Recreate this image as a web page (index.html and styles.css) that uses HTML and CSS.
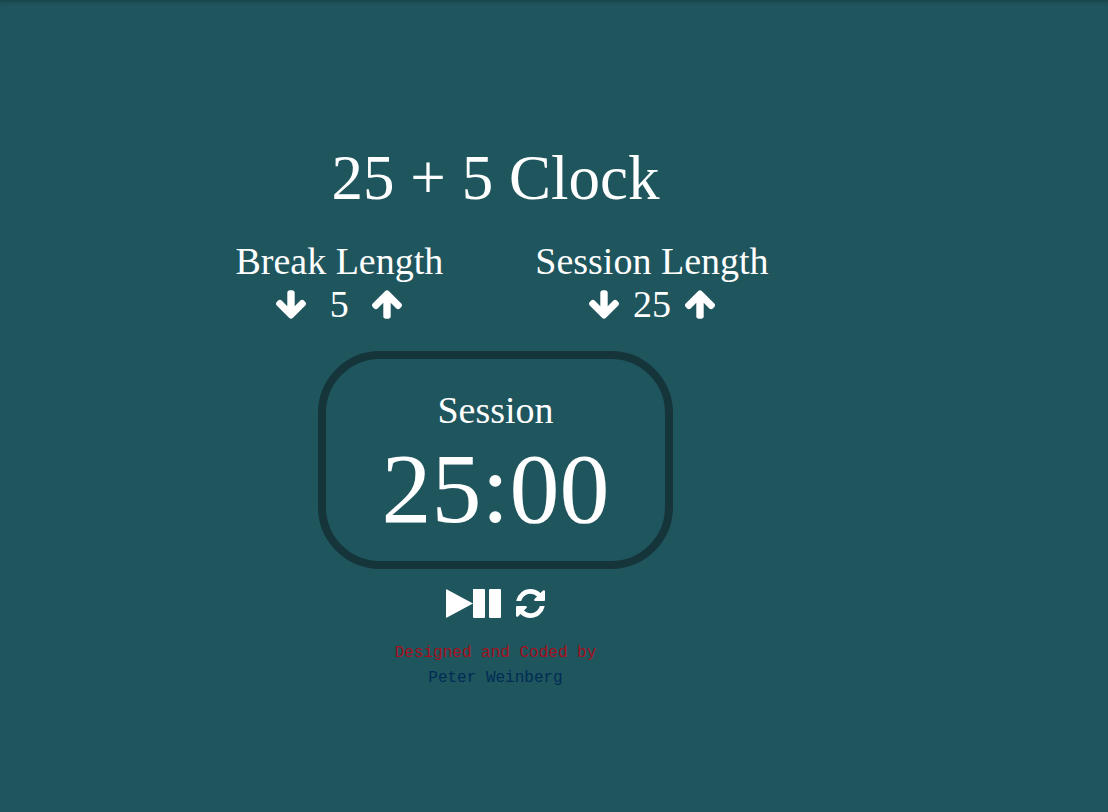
FILE: index.html
```html
<!DOCTYPE html>
<html lang="en">
<head>
<meta charset="utf-8">
<meta name="viewport" content="width=device-width, initial-scale=1">
<title>25 + 5 Clock</title>
<link rel="stylesheet" href="styles.css">
</head>
<body>
<svg class="sprite" aria-hidden="true">
  <symbol id="arrow-down" viewBox="117 128 1558 1483"><path d="M1675 832q0 53-37 90l-651 652q-39 37-91 37-53 0-90-37l-651-652q-38-36-38-90 0-53 38-91l74-75q39-37 91-37 53 0 90 37l294 294v-704q0-52 38-90t90-38h128q52 0 90 38t38 90v704l294-294q37-37 90-37 52 0 91 37l75 75q37 39 37 91z"/></symbol>
  <symbol id="arrow-up" viewBox="117 192 1558 1472"><path d="M1675 971q0 51-37 90l-75 75q-38 38-91 38-54 0-90-38l-294-293v704q0 52-37.500 84.500t-90.500 32.500h-128q-53 0-90.500-32.500t-37.500-84.500v-704l-294 293q-36 38-90 38t-90-38l-75-75q-38-38-38-90 0-53 38-91l651-651q35-37 90-37 54 0 91 37l651 651q37 39 37 91z"/></symbol>
</svg>
<main class="clock">
  <h1 class="title">25 + 5 Clock</h1>
  <div class="settings">
    <section class="setting" aria-labelledby="break-label">
      <h2 class="label" id="break-label">Break Length</h2>
      <div class="stepper">
        <button class="icon-button" type="button" aria-label="Decrease break length"><svg class="arrow"><use href="#arrow-down"/></svg></button>
        <span class="length">5</span>
        <button class="icon-button" type="button" aria-label="Increase break length"><svg class="arrow"><use href="#arrow-up"/></svg></button>
      </div>
    </section>
    <section class="setting" aria-labelledby="session-label">
      <h2 class="label" id="session-label">Session Length</h2>
      <div class="stepper">
        <button class="icon-button" type="button" aria-label="Decrease session length"><svg class="arrow"><use href="#arrow-down"/></svg></button>
        <span class="length">25</span>
        <button class="icon-button" type="button" aria-label="Increase session length"><svg class="arrow"><use href="#arrow-up"/></svg></button>
      </div>
    </section>
  </div>
  <section class="timer">
    <h2 class="label">Session</h2>
    <div class="time" role="timer">25:00</div>
  </section>
  <div class="controls">
    <button class="icon-button" type="button" aria-label="Start or pause"><svg class="play-pause" viewBox="0 0 56 29"><path d="M0 1Q0 0 1 0.500L27 14.500L1 28.500Q0 29 0 28ZM27 0h11q1 0 1 1v27q0 1-1 1h-10q-1 0-1-1ZM44 0h10q1 0 1 1v27q0 1-1 1h-10q-1 0-1-1v-27q0-1 1-1Z"/></svg></button>
    <button class="icon-button" type="button" aria-label="Reset"><svg class="refresh" viewBox="128 128 1536 1536"><path d="M1639 1056q0 5-1 7-64 268-268 434.500t-478 166.500q-146 0-282.500-55t-243.500-157l-129 129q-19 19-45 19t-45-19-19-45v-448q0-26 19-45t45-19h448q26 0 45 19t19 45-19 45l-137 137q71 66 161 102t187 36q134 0 250-65t186-179q11-17 53-117 8-23 30-23h192q13 0 22.500 9.500t9.500 22.500zm25-800v448q0 26-19 45t-45 19h-448q-26 0-45-19t-19-45 19-45l138-138q-148-137-349-137-134 0-250 65t-186 179q-11 17-53 117-8 23-30 23h-199q-13 0-22.500-9.500t-9.500-22.500v-7q65-268 270-434.500t480-166.500q146 0 284 55.500t245 156.500l130-129q19-19 45-19t45 19 19 45z"/></svg></button>
  </div>
  <footer class="credit">Designed and Coded by<br><a class="author" href="#author">Peter Weinberg</a></footer>
</main>
</body>
</html>
```

FILE: styles.css
```css
* {
  box-sizing: border-box;
}

body {
  margin: 0;
  min-height: 100vh;
  background: #1f555d;
  box-shadow: inset 0 5px 5px -4px rgba(0, 0, 0, 0.3);
  color: #fff;
  font-family: "Liberation Serif", "Times New Roman", serif;
}

.sprite {
  display: none;
}

.clock {
  display: flex;
  flex-direction: column;
  align-items: center;
  padding: 143px 117px 32px 0;
}

.title {
  margin: 0;
  font-size: 63px;
  font-weight: 400;
  line-height: 70px;
}

.settings {
  display: flex;
  gap: 92px;
  margin-top: 27px;
  padding-left: 13px;
}

.setting {
  text-align: center;
}

.label {
  margin: 0;
  font-size: 38px;
  font-weight: 400;
  line-height: 43px;
}

.stepper {
  display: flex;
  justify-content: center;
  align-items: center;
}

.length {
  width: 66px;
  font-size: 38px;
  line-height: 43px;
}

.icon-button {
  display: flex;
  padding: 0;
  border: 0;
  background: none;
  color: inherit;
  cursor: pointer;
}

.icon-button svg {
  display: block;
  fill: currentColor;
}

.arrow {
  width: 30px;
  height: 29px;
}

.timer {
  margin-top: 25px;
  padding: 30px 56px 15px;
  border: 8px solid #15353a;
  border-radius: 62px;
  text-align: center;
}

.time {
  font-size: 100px;
  line-height: 114px;
}

.controls {
  display: flex;
  gap: 14px;
  margin-top: 20px;
}

.play-pause {
  width: 56px;
  height: 29px;
}

.refresh {
  width: 29px;
  height: 29px;
}

.credit {
  margin-top: 23px;
  color: #a5101c;
  font-family: "Liberation Mono", "Courier New", monospace;
  font-size: 16px;
  line-height: 25px;
  text-align: center;
}

.author {
  color: #002c56;
  text-decoration: none;
}
```
